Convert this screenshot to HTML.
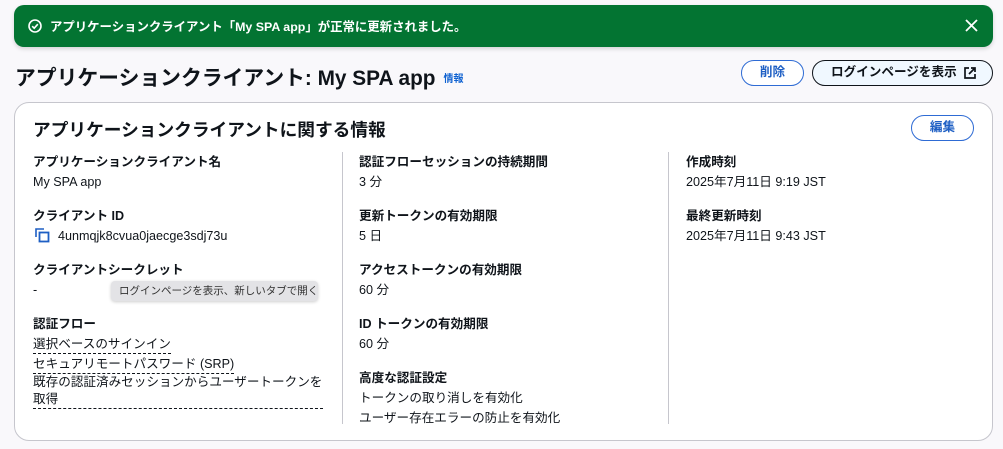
<!DOCTYPE html>
<html><head><meta charset="utf-8"><style>
*{box-sizing:border-box;margin:0;padding:0}
body{width:1003px;height:449px;background:#f9f8fb;font-family:"Liberation Sans","Noto Sans CJK JP",sans-serif;color:#0f141a;position:relative;overflow:hidden}
.banner{position:absolute;left:14px;top:5px;width:979px;height:42px;background:#037432;border-radius:10px;color:#fff;font-size:12.4px;font-weight:bold;box-shadow:0 2px 4px rgba(0,0,0,.15)}
.banner .t{position:absolute;left:36px;top:12px;white-space:nowrap}
.banner svg{position:absolute}
h1{position:absolute;left:15px;top:61px;font-size:20.8px;font-weight:bold;white-space:nowrap}
h1 small{font-size:10px;color:#0f62d1;margin-left:8px;vertical-align:3px}
.btn{position:absolute;height:26px;border:1.5px solid #2e6bd4;border-radius:14px;font-size:12.6px;font-weight:bold;color:#1e5fc4;text-align:center;line-height:23px;background:#fff;white-space:nowrap}
.card{position:absolute;left:14px;top:102px;width:979px;height:339px;background:#fff;border:1px solid #c6c6cd;border-radius:15px}
h2{position:absolute;left:33px;top:116px;font-size:17.7px;font-weight:bold}
.col{position:absolute;top:152px;font-size:12.6px;line-height:20px}
.col .f{height:54px}
.col b{display:block}
.div{position:absolute;top:152px;width:1px;height:272px;background:#c6c6cd}
.u{border-bottom:1px dashed #0f141a;display:inline-block;line-height:17px}
</style></head><body>
<div class="banner">
<svg style="left:14px;top:14px" width="14" height="14" viewBox="0 0 14 14"><circle cx="7" cy="7" r="6" fill="none" stroke="#fff" stroke-width="1.6"/><path d="M4.2 7.2l2 2 3.6-4" fill="none" stroke="#fff" stroke-width="1.6"/></svg>
<span class="t">アプリケーションクライアント「My SPA app」が正常に更新されました。</span>
<svg style="left:951px;top:14px" width="13" height="13" viewBox="0 0 13 13"><path d="M1 1l11 11M12 1L1 12" stroke="#fff" stroke-width="1.8"/></svg>
</div>
<h1>アプリケーションクライアント: My SPA app<small>情報</small></h1>
<div class="btn" style="left:741px;top:60px;width:63px">削除</div>
<div class="btn" style="left:812px;top:60px;width:181px;border-color:#0f141a;color:#0f141a;background:#f0f8ff;text-align:left;padding-left:18px">ログインページを表示
<svg style="position:absolute;left:151px;top:6px" width="12" height="12" viewBox="0 0 12 12"><path d="M5 1H1v10h10V7M7 1h4v4M11 1L5 7" fill="none" stroke="#0f141a" stroke-width="1.7"/></svg></div>
<div class="card"></div>
<h2>アプリケーションクライアントに関する情報</h2>
<div class="btn" style="left:911px;top:115px;width:63px">編集</div>
<div class="div" style="left:342px"></div>
<div class="div" style="left:668px"></div>
<div class="col" style="left:33px;width:300px">
<div class="f"><b>アプリケーションクライアント名</b>My SPA app</div>
<div class="f"><b>クライアント ID</b><span style="display:inline-block;width:25px;position:relative;height:14px;vertical-align:-2px"><svg style="position:absolute;left:2px;top:0" width="15" height="15" viewBox="0 0 15 15"><path d="M1 9V1h8" fill="none" stroke="#1e5fc4" stroke-width="1.6"/><rect x="4.5" y="4.5" width="9" height="9" fill="none" stroke="#1e5fc4" stroke-width="1.8"/></svg></span>4unmqjk8cvua0jaecge3sdj73u</div>
<div class="f"><b>クライアントシークレット</b>-</div>
<div class="f"><b>認証フロー</b><span class="u">選択ベースのサインイン</span><br><span class="u">セキュアリモートパスワード (SRP)</span><br><span style="display:inline-block;border-bottom:1px dashed #0f141a;line-height:17px;width:290px">既存の認証済みセッションからユーザートークンを取得</span></div>
</div>
<div style="position:absolute;left:111px;top:281px;width:207px;height:20px;background:#e3e3e6;border-radius:4px;font-size:10.5px;color:#333;line-height:20px;padding-left:8px;white-space:nowrap;overflow:hidden;box-shadow:0 1px 3px rgba(0,0,0,.2)">ログインページを表示、新しいタブで開く</div>
<div class="col" style="left:359px;width:300px">
<div class="f"><b>認証フローセッションの持続期間</b>3 分</div>
<div class="f"><b>更新トークンの有効期限</b>5 日</div>
<div class="f"><b>アクセストークンの有効期限</b>60 分</div>
<div class="f"><b>ID トークンの有効期限</b>60 分</div>
<div class="f"><b>高度な認証設定</b>トークンの取り消しを有効化<br>ユーザー存在エラーの防止を有効化</div>
</div>
<div class="col" style="left:686px;width:290px">
<div class="f"><b>作成時刻</b>2025年7月11日 9:19 JST</div>
<div class="f"><b>最終更新時刻</b>2025年7月11日 9:43 JST</div>
</div>
</body></html>
